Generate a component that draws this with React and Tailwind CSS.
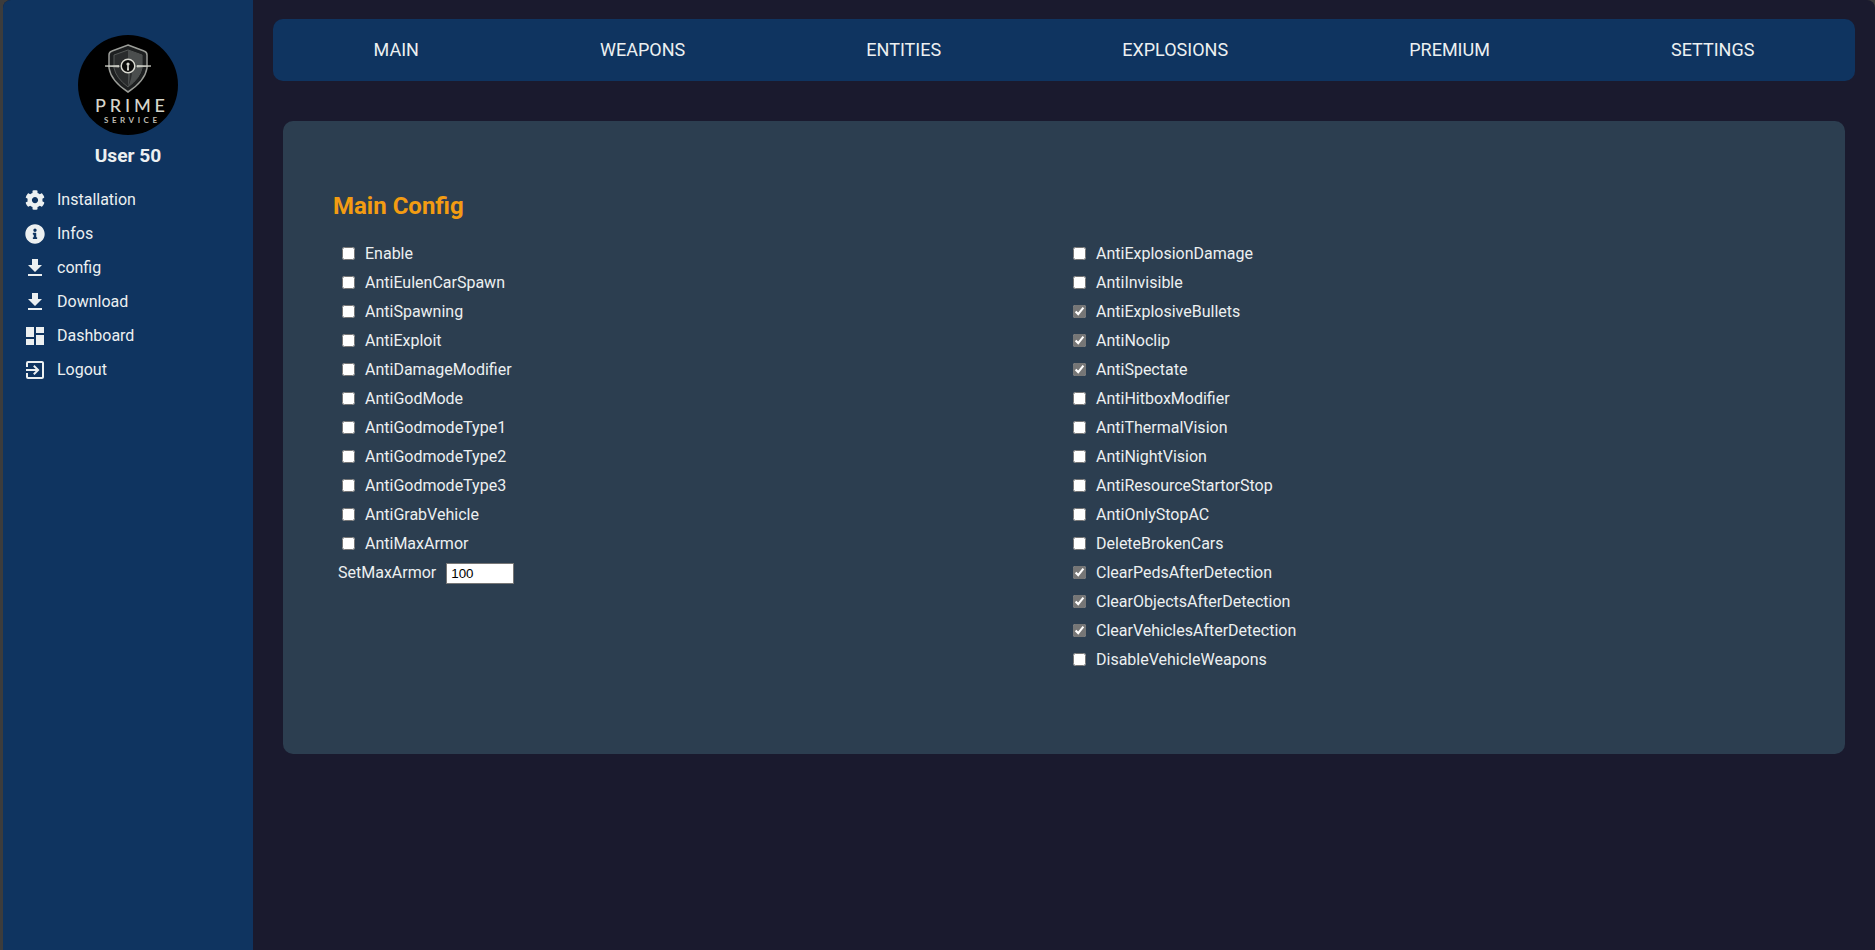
import { FaCog, FaInfoCircle } from "react-icons/fa";
import { MdFileDownload, MdDashboard, MdExitToApp } from "react-icons/md";

const navItems = ["MAIN", "WEAPONS", "ENTITIES", "EXPLOSIONS", "PREMIUM", "SETTINGS"];

const sideItems = [
  { label: "Installation", icon: <FaCog size={20} /> },
  { label: "Infos", icon: <FaInfoCircle size={20} /> },
  { label: "config", icon: <MdFileDownload size={24} /> },
  { label: "Download", icon: <MdFileDownload size={24} /> },
  { label: "Dashboard", icon: <MdDashboard size={24} /> },
  { label: "Logout", icon: <MdExitToApp size={24} /> },
];

const leftCol = [
  ["Enable", false],
  ["AntiEulenCarSpawn", false],
  ["AntiSpawning", false],
  ["AntiExploit", false],
  ["AntiDamageModifier", false],
  ["AntiGodMode", false],
  ["AntiGodmodeType1", false],
  ["AntiGodmodeType2", false],
  ["AntiGodmodeType3", false],
  ["AntiGrabVehicle", false],
  ["AntiMaxArmor", false],
];

const rightCol = [
  ["AntiExplosionDamage", false],
  ["AntiInvisible", false],
  ["AntiExplosiveBullets", true],
  ["AntiNoclip", true],
  ["AntiSpectate", true],
  ["AntiHitboxModifier", false],
  ["AntiThermalVision", false],
  ["AntiNightVision", false],
  ["AntiResourceStartorStop", false],
  ["AntiOnlyStopAC", false],
  ["DeleteBrokenCars", false],
  ["ClearPedsAfterDetection", true],
  ["ClearObjectsAfterDetection", true],
  ["ClearVehiclesAfterDetection", true],
  ["DisableVehicleWeapons", false],
];

function Logo() {
  return (
    <svg viewBox="0 0 100 100" className="w-[100px] h-[100px] block">
      <circle cx="50" cy="50" r="50" fill="#000" />
      {/* shield */}
      <path d="M50 10 L66 16 Q69 17 69 20 V33 Q67 46 50 57 Q33 46 31 33 V20 Q31 17 34 16 Z" fill="#1d1f20" stroke="#9b9d98" strokeWidth="1.5" />
      <path d="M50 15 L64 20 V33 Q62 43 50 52 Q38 43 36 33 V20 Z" fill="#2a2c2d" stroke="#555857" strokeWidth="1" />
      <path d="M50 15 L64 20 V33 Q62 43 50 52 Z" fill="#4b4e4e" />
      <path d="M50 23 Q58 35 50 52 Q54 40 50 23" fill="#2a2c2d" />
      <path d="M27 31 L41 30.5 V32 Z M73 31 L59 30.5 V32 Z" fill="#cfd0c8" stroke="#cfd0c8" strokeWidth="0.8" strokeLinejoin="round" />
      <circle cx="50" cy="31" r="6.8" fill="#0a0a0a" stroke="#d8d8d0" strokeWidth="1.5" />
      <circle cx="50" cy="29" r="1.6" fill="#d8d8d0" />
      <path d="M49.3 30 H50.7 L51 35.5 H49 Z" fill="#d8d8d0" />
      <text x="17" y="77" textLength="70" lengthAdjust="spacing" fill="#d6d5ca" fontFamily="Lato, sans-serif" fontSize="18" fontWeight="500">PRIME</text>
      <text x="26" y="88" textLength="53" lengthAdjust="spacing" fill="#bdbcb3" fontFamily="Lato, sans-serif" fontSize="8" fontWeight="700">SERVICE</text>
    </svg>
  );
}

function CheckRow({ label, checked }) {
  return (
    <label className="flex items-center h-[29px] pl-[9px]">
      <input type="checkbox" defaultChecked={checked} className="w-[13px] h-[13px] m-0 mr-[10px] accent-[#767676]" />
      <span>{label}</span>
    </label>
  );
}

export default function App() {
  return (
    <div className="h-[950px] w-full bg-[#3c3c3c] overflow-hidden text-[#ecf0f1] text-base font-['Roboto',sans-serif]">
      <div className="flex h-full ml-[3px] rounded-t-lg overflow-hidden bg-[#1a1a2e]">
        <aside className="w-[250px] shrink-0 bg-[#0f3460]">
          <div className="flex flex-col items-center pt-[35px]">
            <Logo />
            <div className="mt-[8px] text-[19.2px] font-bold leading-[26px]">User 50</div>
          </div>
          <nav className="mt-[14px] flex flex-col">
            {sideItems.map((it) => (
              <div key={it.label} className="flex items-center h-[34px] pl-[20px]">
                <span className="w-[24px] flex justify-center mr-[10px]">{it.icon}</span>
                <span>{it.label}</span>
              </div>
            ))}
          </nav>
        </aside>
        <main className="flex-1 min-w-0 px-[20px] pt-[19px]">
          <div className="flex justify-around items-center h-[62px] px-2.5 rounded-[10px] bg-[#0f3460] text-lg">
            {navItems.map((n) => (
              <span key={n}>{n}</span>
            ))}
          </div>
          <section className="mx-[10px] mt-[40px] h-[633px] rounded-[10px] bg-[#2c3e50] px-[50px] pt-[66px]">
            <h2 className="text-2xl font-bold leading-[38px] text-[#f39c12]">Main Config</h2>
            <div className="grid grid-cols-2 mt-[14px]">
              <div>
                {leftCol.map(([l, c]) => (
                  <CheckRow key={l} label={l} checked={c} />
                ))}
                <div className="flex items-center h-[29px] pl-[5px] pt-[1px]">
                  <span>SetMaxArmor</span>
                  <input defaultValue="100" className="ml-[10px] w-[68px] h-[21px] px-[4px] bg-white text-black text-[13.33px] border border-[#767676] font-['Liberation_Sans',sans-serif]" />
                </div>
              </div>
              <div>
                {rightCol.map(([l, c]) => (
                  <CheckRow key={l} label={l} checked={c} />
                ))}
              </div>
            </div>
          </section>
        </main>
      </div>
    </div>
  );
}
